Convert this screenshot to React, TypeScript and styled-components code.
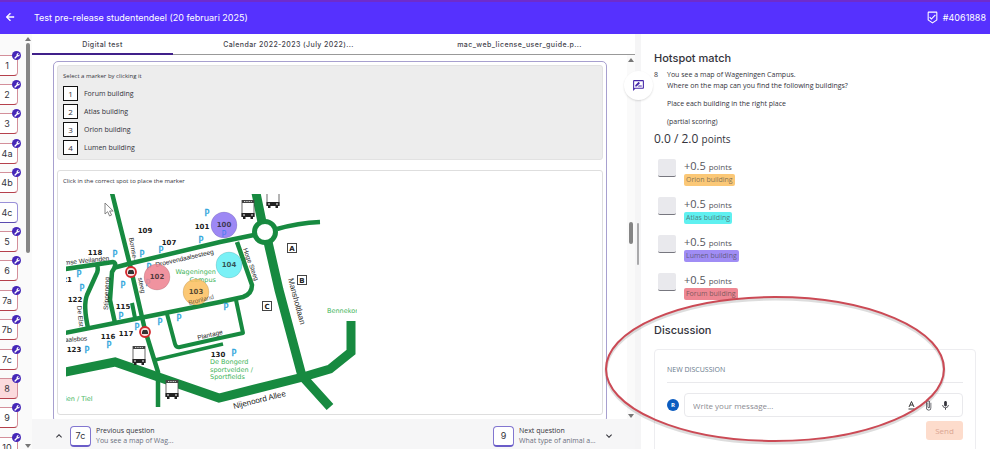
import React from "react";
import styled, { createGlobalStyle, css } from "styled-components";
import {
  MdArrowBack,
  MdOutlineBeenhere,
  MdOutlineRateReview,
  MdKeyboardArrowUp,
  MdKeyboardArrowDown,
  MdMic,
  MdAttachFile,
  MdBuild,
} from "react-icons/md";

const GlobalStyle = createGlobalStyle`
  * { box-sizing: border-box; }
  html, body { margin: 0; height: 100%; overflow: hidden; }
  #root { height: 100%; }
  body, button, input { font-family: "Open Sans", "Noto Sans", sans-serif; color: #33333b; }
  button { padding: 0; margin: 0; background: none; border: 0; cursor: pointer; }
  p, h1, h2, ul { margin: 0; padding: 0; }
`;

const heading = css`
  font-family: Inter, "Open Sans", sans-serif;
`;

const Page = styled.div`
  position: relative;
  display: flex;
  flex-direction: column;
  height: 100vh;
  overflow: hidden;
  background: #fff;
`;

const Header = styled.header`
  ${heading}
  flex: none;
  display: flex;
  align-items: center;
  height: 34px;
  padding: 0 4px 2px;
  background: #5631fe;
  border-top: 2px solid #6f2bcb;
  color: #fff;
`;

const BackButton = styled.button`
  display: flex;
  color: #fff;
  font-size: 12px;
  svg path:last-child { stroke: #fff; stroke-width: 1; }
`;

const PageTitle = styled.h1`
  flex: 1;
  margin-left: 18px;
  font-size: 9px;
  font-weight: 400;
`;

const Student = styled.div`
  display: flex;
  align-items: center;
  gap: 4px;
  font-size: 9px;
  font-weight: 400;
  svg { font-size: 13px; }
`;

const Body = styled.div`
  flex: 1;
  min-height: 0;
  display: grid;
  grid-template-columns: 32px minmax(0, 603fr) 6px minmax(0, 349fr);
  grid-template-rows: minmax(0, 1fr);
`;

const Sidebar = styled.nav`
  display: flex;
  background: #fafafa;
  overflow: hidden;
`;

const QuestionList = styled.div`
  flex: 1;
  display: grid;
  align-content: start;
  grid-auto-rows: 29px 29px 30px 29px 30px;
  padding-top: 21px;
  margin-left: -4px;
`;

const QuestionTile = styled.button<{ $tone: "red" | "purple"; $active?: boolean }>`
  ${heading}
  position: relative;
  width: 22px;
  height: 21px;
  font-size: 9px;
  background: ${(p) => (p.$active ? "#fbdadd" : "#fff")};
  border: 1px solid ${(p) => (p.$tone === "red" ? "#d38f9a" : "#9a90d8")};
  border-bottom-color: ${(p) => (p.$tone === "red" ? "#b5404c" : "#5a4bb0")};
  border-radius: 4px;
`;

const TileBadge = styled.span`
  position: absolute;
  top: -5px;
  right: -4px;
  display: flex;
  align-items: center;
  justify-content: center;
  width: 9px;
  height: 9px;
  border-radius: 50%;
  background: #4527b8;
  color: #fff;
  font-size: 6px;
  svg { transform: scaleX(-1); }
`;

const Scrollbar = styled.div<{ $pad: number }>`
  flex: none;
  display: flex;
  flex-direction: column;
  align-items: center;
  justify-content: space-between;
  width: 8px;
  padding: ${(p) => p.$pad}px 0 1px;
  background: #fafafa;
`;

const ScrollArrow = styled.span<{ $down?: boolean }>`
  border: 3px solid transparent;
  border-${(p) => (p.$down ? "top" : "bottom")}: 4px solid #777;
  border-${(p) => (p.$down ? "bottom" : "top")}: 0;
`;

const ScrollThumb = styled.span<{ $length: number }>`
  width: 4px;
  height: ${(p) => p.$length}px;
  border-radius: 2px;
  background: #858585;
`;

const ThumbSpace = styled.span<{ $grow: number }>`
  flex: ${(p) => p.$grow};
`;

const Main = styled.main`
  display: flex;
  flex-direction: column;
`;

const Tabs = styled.div`
  flex: none;
  display: grid;
  grid-template-columns: 141fr 231fr 231fr;
  height: 21px;
  border-bottom: 1px solid #999;
`;

const Tab = styled.button<{ $active?: boolean }>`
  ${heading}
  height: 21px;
  padding-top: 2px;
  font-size: 7px;
  font-weight: 500;
  letter-spacing: 0.06em;
  color: #44444c;
  border-bottom: 2px solid ${(p) => (p.$active ? "#40208a" : "transparent")};
`;

const Viewport = styled.div`
  flex: 1;
  min-height: 0;
  display: flex;
`;

const Scroller = styled.div`
  flex: 1;
  min-width: 0;
  padding: 6px 20px 0 21px;
  overflow: hidden;
`;

const Frame = styled.section`
  height: calc(100% + 4px);
  padding: 3px;
  border: 1px solid #a7a0cf;
  border-radius: 5px;
`;

const Card = styled.div<{ $shaded?: boolean }>`
  padding: 6px 5px 4px;
  border: 1px solid ${(p) => (p.$shaded ? "#e2e2e2" : "#dedede")};
  border-radius: 3px;
  background: ${(p) => (p.$shaded ? "#ededed" : "#fff")};
  & + & { margin-top: 10px; }
`;

const Hint = styled.p`
  font-size: 6px;
  line-height: 9px;
`;

const MarkerList = styled.div`
  display: grid;
  gap: 3px;
  margin-top: 5px;
`;

const Marker = styled.button`
  display: flex;
  align-items: center;
  gap: 6px;
  font-size: 7px;
  line-height: 12px;
`;

const MarkerKey = styled.span`
  display: flex;
  align-items: center;
  justify-content: center;
  width: 15px;
  height: 15px;
  border: 1px solid #111;
  background: #fff;
  font-size: 8px;
`;

const MapBox = styled.div`
  margin: 8px 0 0 3px;
  svg { display: block; }
`;

const Footer = styled.footer`
  flex: none;
  display: flex;
  align-items: center;
  justify-content: space-between;
  height: 30px;
  padding: 4px 20px 0 21px;
  background: #f6f6f7;
`;

const NavGroup = styled.button`
  display: flex;
  align-items: center;
  gap: 5px;
  text-align: left;
  > svg { font-size: 12px; }
`;

const NavKey = styled.span`
  ${heading}
  display: flex;
  align-items: center;
  justify-content: center;
  width: 21px;
  height: 21px;
  font-size: 9px;
  background: #fff;
  border: 1px solid #8276d0;
  border-bottom: 2px solid #6a5cc8;
  border-radius: 4px;
`;

const NavText = styled.span`
  display: grid;
  width: 79px;
  font-size: 7px;
  line-height: 10px;
  white-space: nowrap;
  color: #6c7080;
  strong { font-weight: 500; color: #33333b; }
`;

const Splitter = styled.div`
  position: relative;
  display: flex;
  align-items: center;
  justify-content: center;
  padding-top: 4px;
  background: #f5f5f6;
`;

const SplitHandle = styled.span`
  width: 2px;
  height: 42px;
  border-radius: 1px;
  background: #a9a9ab;
`;

const ReviewButton = styled.button`
  position: absolute;
  top: 37px;
  left: -11px;
  z-index: 1;
  display: flex;
  align-items: center;
  justify-content: center;
  width: 29px;
  height: 29px;
  border-radius: 50%;
  background: #fff;
  box-shadow: 0 1px 2px #0002;
  font-size: 13px;
  svg { color: #4527a8; }
`;

const Panel = styled.aside`
  padding: 16px 14px 0 13px;
  overflow: hidden;
`;

const SectionTitle = styled.h2`
  ${heading}
  font-size: 11px;
  line-height: 16px;
  font-weight: 500;
`;

const Question = styled.div`
  display: grid;
  grid-template-columns: 13px 1fr;
  margin-top: 3px;
  font-size: 7px;
  line-height: 11px;
  p + p { margin-top: 7px; }
`;

const Total = styled.p`
  margin-top: 3px;
  font-size: 12px;
  line-height: 18px;
  small { font-size: 10px; }
`;

const ScoreList = styled.div`
  display: grid;
  grid-auto-rows: 38px;
  margin: 11px 0 0 4px;
`;

const ScoreRow = styled.div`
  display: flex;
  align-items: flex-start;
  gap: 8px;
`;

const ScoreBox = styled.span`
  width: 18px;
  height: 18px;
  border-radius: 2px;
  background: #e9e9ed;
  border-bottom: 1px solid #77777f;
`;

const ScoreText = styled.div`
  font-size: 11px;
  line-height: 14px;
  color: #55555c;
  small { font-size: 8px; }
`;

const Chip = styled.span<{ $color: string }>`
  display: block;
  width: fit-content;
  padding: 0 2px;
  border-radius: 2px;
  font-size: 7px;
  line-height: 12px;
  color: #444a;
  background: ${(p) => p.$color};
`;

const Discussion = styled.section`
  margin-top: 11px;
`;

const Thread = styled.form`
  margin-top: 11px;
  padding: 15px 12px 0 12px;
  height: 110px;
  border: 1px solid #ededf0;
  border-radius: 4px;
`;

const ThreadTitle = styled.p`
  padding-bottom: 8px;
  border-bottom: 1px solid #e9e9ec;
  font-size: 7px;
  line-height: 9px;
  color: #66788a;
`;

const Composer = styled.div`
  display: flex;
  align-items: center;
  gap: 5px;
  margin-top: 10px;
`;

const Avatar = styled.span`
  display: flex;
  align-items: center;
  justify-content: center;
  width: 12px;
  height: 12px;
  border-radius: 50%;
  background: #0b5cc0;
  color: #fff;
  font-size: 6px;
  font-weight: 700;
`;

const MessageBox = styled.div`
  flex: 1;
  display: flex;
  align-items: center;
  height: 24px;
  padding: 0 8px;
  border: 1px solid #e9e9ec;
  border-radius: 4px;
`;

const MessageInput = styled.input`
  flex: 1;
  min-width: 0;
  padding: 0;
  border: 0;
  outline: 0;
  font-size: 8px;
  &::placeholder { color: #8b8b92; opacity: 1; }
`;

const Tool = styled.button`
  display: flex;
  justify-content: center;
  width: 17px;
  font-size: 11px;
`;

const SendButton = styled.button`
  display: block;
  width: 37px;
  height: 19px;
  margin: 4px 0 0 auto;
  border-radius: 3px;
  background: #fddccc;
  color: #dba592;
  font-size: 8px;
`;

const Callout = styled.svg`
  position: absolute;
  top: 290px;
  right: 40px;
  pointer-events: none;
`;

const questions = ["1", "2", "3", "4a", "4b", "4c", "5", "6", "7a", "7b", "7c", "8", "9", "10"];
const buildings = ["Forum building", "Atlas building", "Orion building", "Lumen building"];
const scores = [
  { name: "Orion building", color: "#fbc877" },
  { name: "Atlas building", color: "#5ff0f0" },
  { name: "Lumen building", color: "#a08df5" },
  { name: "Forum building", color: "#ee8793" },
];

const parking = [
  [207, 213], [201, 240], [161, 250], [142, 254], [115, 254], [79, 274], [82, 288],
  [123, 285], [149, 267], [148, 283], [121, 316], [137, 327], [160, 322],
  [179, 318], [109, 345], [87, 350], [226, 307], [234, 353],
];

const numbers: [string, number, number][] = [
  ["109", 145, 230], ["107", 169, 242], ["118", 95, 252], ["101", 202, 226],
  ["122", 75, 299], ["21", 67, 279], ["115", 123, 306], ["116", 108, 336],
  ["117", 126, 333], ["123", 74, 349], ["130", 218, 354],
];

const placed: [string, number, number, string][] = [
  ["100", 224, 225, "#8f78f2"],
  ["102", 157, 277, "#ee8492"],
  ["103", 196, 292, "#fbc062"],
  ["104", 229, 265, "#68eff5"],
];

const streets: [string, number, number, number, number][] = [
  ["mse Weilanden", 65, 265, -6, 6.5],
  ["Droevendaalsesteeg", 156, 267, -13, 6.5],
  ["Bornse-", 129, 238, 80, 6.5],
  ["steeg", 138, 278, 78, 6.5],
  ["Hoge Steeg", 243, 249, 70, 6.5],
  ["Mansholtlaan", 288, 279, 75, 8],
  ["Stippeneng", 108, 310, -88, 6.5],
  ["De Elst", 77, 306, 84, 6.5],
  ["aalsbos", 65, 342, -4, 6.5],
  ["Plantage", 198, 340, -14, 6.5],
  ["Nijenoord Allee", 234, 409, -14, 8],
];

const Bus = ({ x, y }: { x: number; y: number }) => (
  <g transform={`translate(${x} ${y})`}>
    <rect x="1" y="0.500" width="12" height="16" fill="#fff" stroke="#444" strokeWidth="0.800" />
    <rect x="1" y="0" width="12" height="3" fill="#444" />
    <path d="M3 1.500h8" stroke="#fff" strokeWidth="0.800" strokeDasharray="1 0.700" />
    <path d="M0.500 13h13v4h-1.500v2H9.500v-2h-5v2H2v-2H0.500z" fill="#222" />
    <path d="M2 15h2M10 15h2" stroke="#fff" strokeWidth="1" />
  </g>
);

const CampusMap = () => (
  <svg width="291" height="216" viewBox="66 194 291 216" role="img" aria-label="Map of Wageningen Campus">
    <g fill="none" stroke="#178a40" strokeWidth="4.500" strokeLinejoin="round">
      <path d="M112 193L130 265L145 330L158 372V407" />
      <path d="M113 268L132 263L220 242L254 235" />
      <path d="M277 229Q298 223 320 222" />
      <path d="M65 269L113 262Q116 262 115 267L112 272L110 300L115 323" />
      <path d="M97 265Q99 270 96 275L87 295Q83 305 88 328" />
      <path d="M65 333L115 323L140 318L220 302L243 297Q252 294 252 285L237 242" />
      <path d="M132 303L135 318" strokeWidth="4" />
      <path d="M167 314L175 344Q176 348 180 347L220 338L243 333L236 300" strokeWidth="4" />
      <path d="M155 360L223 344" strokeWidth="3.500" />
      <path d="M256 193L262 222M268 242L279 290L302 376L330 407" strokeWidth="9" />
      <path d="M65 372L115 362L219 398L303 377L330 369L351 352V321" strokeWidth="9" strokeLinejoin="miter" />
      <circle cx="265" cy="232" r="10.500" strokeWidth="5" fill="#fff" />
    </g>
    <path d="M105 203v11l2.600-2.300 2 4.300 2-1-2-4h3.600z" fill="#fff" stroke="#777" strokeWidth="0.900" />
    <Bus x={241} y={200} />
    <Bus x={266} y={189} />
    <Bus x={132} y={346} />
    <Bus x={165} y={380} />
    {[[131, 272], [145, 332]].map(([x, y]) => (
      <g key={x} transform={`translate(${x} ${y})`}>
        <circle r="5" fill="#f7dede" stroke="#d3272c" strokeWidth="1.800" />
        <path d="M-3 2v-2l1-2h4l1 2v2z" fill="#333" />
      </g>
    ))}
    <g fontFamily="DejaVu Sans, sans-serif" fontSize="8" fill="#2ea5dc" stroke="#2ea5dc" strokeWidth="0.400" textAnchor="middle">
      {parking.map(([x, y]) => <text key={`${x}-${y}`} x={x} y={y + 3}>P</text>)}
    </g>
    <g fontFamily="DejaVu Sans, sans-serif" fontSize="7" fontWeight="700" fill="#1c1c1c" textAnchor="middle">
      {numbers.map(([label, x, y]) => <text key={label} x={x} y={y + 3}>{label}</text>)}
    </g>
    <g fontFamily="Liberation Sans, sans-serif" fill="#222">
      {streets.map(([label, x, y, angle, size]) => (
        <text key={label} fontSize={size} transform={`translate(${x} ${y}) rotate(${angle})`}>{label}</text>
      ))}
    </g>
    <g fontFamily="DejaVu Sans, sans-serif" fontSize="6.500" fill="#3eb458">
      <text x="216" y="274" textAnchor="end">Wageningen</text>
      <text x="216" y="282" textAnchor="end">Campus</text>
      <text x="327" y="313">Bennekom</text>
      <text x="210" y="364">De Bongerd</text>
      <text x="210" y="372">sportvelden /</text>
      <text x="210" y="379">Sportfields</text>
      <text x="65" y="401">ien / Tiel</text>
    </g>
    {placed.map(([label, x, y, color]) => (
      <g key={label}>
        <circle cx={x} cy={y} r="13" fill={color} fillOpacity="0.880" stroke="#0002" strokeWidth="0.800" />
        <text x={x} y={y + 2} fontFamily="DejaVu Sans, sans-serif" fontSize="7" fontWeight="700" fill="#1c1c1c" fillOpacity="0.750" textAnchor="middle">{label}</text>
      </g>
    ))}
    <text x="224" y="237" fontFamily="DejaVu Sans, sans-serif" fontSize="8" fill="#4a7cf0" textAnchor="middle">P</text>
    <text fontFamily="Liberation Sans, sans-serif" fontSize="6.500" fill="#222" fillOpacity="0.700" transform="translate(189 305) rotate(-14)">Bronland</text>
    {([["A", 292, 248], ["B", 302, 280], ["C", 267, 306]] as [string, number, number][]).map(([label, x, y]) => (
      <g key={label}>
        <rect x={x - 4.5} y={y - 4.5} width="9" height="9" fill="#fff" stroke="#444" />
        <text x={x} y={y + 2.5} fontFamily="DejaVu Sans, sans-serif" fontSize="7" fontWeight="700" fill="#222" textAnchor="middle">{label}</text>
      </g>
    ))}
  </svg>
);

export default function App() {
  return (
    <Page>
      <GlobalStyle />
      <Header>
        <BackButton aria-label="Back"><MdArrowBack /></BackButton>
        <PageTitle>Test pre-release studentendeel (20 februari 2025)</PageTitle>
        <Student><MdOutlineBeenhere />#4061888</Student>
      </Header>
      <Body>
        <Sidebar aria-label="Questions">
          <QuestionList>
            {questions.map((q) => (
              <QuestionTile key={q} $tone={q === "4c" ? "purple" : "red"} $active={q === "8"}>
                {q}
                {q !== "4c" && <TileBadge><MdBuild /></TileBadge>}
              </QuestionTile>
            ))}
          </QuestionList>
          <Scrollbar $pad={3}>
            <ScrollArrow />
            <ThumbSpace $grow={1} />
            <ScrollThumb $length={210} />
            <ThumbSpace $grow={90} />
            <ScrollArrow $down />
          </Scrollbar>
        </Sidebar>
        <Main>
          <Tabs role="tablist">
            <Tab role="tab" aria-selected $active>Digital test</Tab>
            <Tab role="tab">Calendar 2022-2023 (July 2022)...</Tab>
            <Tab role="tab">mac_web_license_user_guide.p...</Tab>
          </Tabs>
          <Viewport>
            <Scroller>
              <Frame>
                <Card $shaded>
                  <Hint>Select a marker by clicking it</Hint>
                  <MarkerList>
                    {buildings.map((name, i) => (
                      <Marker key={name}><MarkerKey>{i + 1}</MarkerKey>{name}</Marker>
                    ))}
                  </MarkerList>
                </Card>
                <Card>
                  <Hint>Click in the correct spot to place the marker</Hint>
                  <MapBox><CampusMap /></MapBox>
                </Card>
              </Frame>
            </Scroller>
            <Scrollbar $pad={3}>
              <ScrollArrow />
              <ThumbSpace $grow={160} />
              <ScrollThumb $length={22} />
              <ThumbSpace $grow={170} />
              <ScrollArrow $down />
            </Scrollbar>
          </Viewport>
          <Footer>
            <NavGroup>
              <MdKeyboardArrowUp />
              <NavKey>7c</NavKey>
              <NavText><strong>Previous question</strong><span>You see a map of Wag...</span></NavText>
            </NavGroup>
            <NavGroup>
              <NavKey>9</NavKey>
              <NavText><strong>Next question</strong><span>What type of animal a...</span></NavText>
              <MdKeyboardArrowDown />
            </NavGroup>
          </Footer>
        </Main>
        <Splitter>
          <SplitHandle />
          <ReviewButton aria-label="Review"><MdOutlineRateReview /></ReviewButton>
        </Splitter>
        <Panel>
          <SectionTitle>Hotspot match</SectionTitle>
          <Question>
            <span>8</span>
            <div>
              <p>You see a map of Wageningen Campus.<br />Where on the map can you find the following buildings?</p>
              <p>Place each building in the right place</p>
              <p>(partial scoring)</p>
            </div>
          </Question>
          <Total>0.0 / 2.0 <small>points</small></Total>
          <ScoreList>
            {scores.map((s) => (
              <ScoreRow key={s.name}>
                <ScoreBox />
                <ScoreText>
                  +0.5 <small>points</small>
                  <Chip $color={s.color}>{s.name}</Chip>
                </ScoreText>
              </ScoreRow>
            ))}
          </ScoreList>
          <Discussion>
            <SectionTitle>Discussion</SectionTitle>
            <Thread onSubmit={(e) => e.preventDefault()}>
              <ThreadTitle>NEW DISCUSSION</ThreadTitle>
              <Composer>
                <Avatar>R</Avatar>
                <MessageBox>
                  <MessageInput aria-label="Message" placeholder="Write your message..." />
                  <Tool type="button" aria-label="Text formatting">
                    <svg width="9" height="10" viewBox="0 0 9 10" fill="none" stroke="#222" strokeWidth="0.900"><path d="M2 7L4.500 1.500L7 7M3 5h3M1.500 9h6" /></svg>
                  </Tool>
                  <Tool type="button" aria-label="Attach file"><MdAttachFile /></Tool>
                  <Tool type="button" aria-label="Record voice"><MdMic /></Tool>
                </MessageBox>
              </Composer>
              <SendButton type="submit">Send</SendButton>
            </Thread>
          </Discussion>
        </Panel>
      </Body>
      <Callout width="350" height="156" viewBox="0 0 350 156" fill="none" aria-hidden="true">
        <ellipse cx="175" cy="81" rx="169" ry="72" stroke="#0002" strokeWidth="3" />
        <ellipse cx="175" cy="79" rx="169" ry="72" stroke="#cb4a55" strokeWidth="2" />
      </Callout>
    </Page>
  );
}
